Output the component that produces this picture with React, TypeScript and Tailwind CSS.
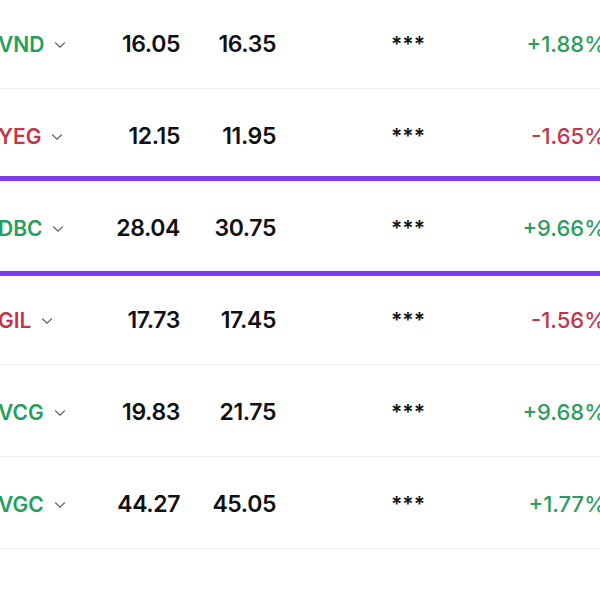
import { ChevronDown } from 'lucide-react';

const ROWS = [
  { sym: 'VND', bid: '16.05', ask: '16.35', pct: '+1.88%', up: true },
  { sym: 'YEG', bid: '12.15', ask: '11.95', pct: '-1.65%', up: false },
  { sym: 'DBC', bid: '28.04', ask: '30.75', pct: '+9.66%', up: true, active: true },
  { sym: 'GIL', bid: '17.73', ask: '17.45', pct: '-1.56%', up: false },
  { sym: 'VCG', bid: '19.83', ask: '21.75', pct: '+9.68%', up: true },
  { sym: 'VGC', bid: '44.27', ask: '45.05', pct: '+1.77%', up: true },
];

export default function App() {
  return (
    <div
      className="w-[600px] h-[600px] overflow-hidden bg-white"
      style={{ fontFamily: 'Inter, "Noto Sans", sans-serif' }}
    >
      <div className="-mt-[3px] -ml-[2px] w-[608px] flex flex-col">
        {ROWS.map((r) => (
          <div
            key={r.sym}
            className="relative h-[92px] pt-[4px] border-b border-[#efefef] flex items-center"
          >
            {r.active && (
              <>
                <div className="absolute left-0 right-0 -top-[5px] h-[5px] bg-[#7b3aec] z-10" />
                <div className="absolute left-0 right-0 -bottom-[4px] h-[5px] bg-[#7b3aec] z-10" />
              </>
            )}
            <div className="w-[100px] flex items-center gap-[7px]">
              <span
                className={`text-[21px] font-semibold ${r.up ? 'text-[#23a05b]' : 'text-[#c5354a]'}`}
              >
                {r.sym}
              </span>
              <ChevronDown size={18} strokeWidth={1.5} className="text-[#666]" />
            </div>
            <div className="w-[82px] text-right text-[23px] font-semibold tracking-[-0.4px] text-[#111]">
              {r.bid}
            </div>
            <div className="w-[96px] text-right text-[23px] font-semibold tracking-[-0.4px] text-[#111]">
              {r.ask}
            </div>
            <div className="ml-[115px] text-[21px] font-semibold text-[#111]">***</div>
            <div
              className={`flex-1 text-right text-[22px] font-medium ${r.up ? 'text-[#2a9d5c]' : 'text-[#c5354a]'}`}
            >
              {r.pct}
            </div>
          </div>
        ))}
      </div>
    </div>
  );
}
